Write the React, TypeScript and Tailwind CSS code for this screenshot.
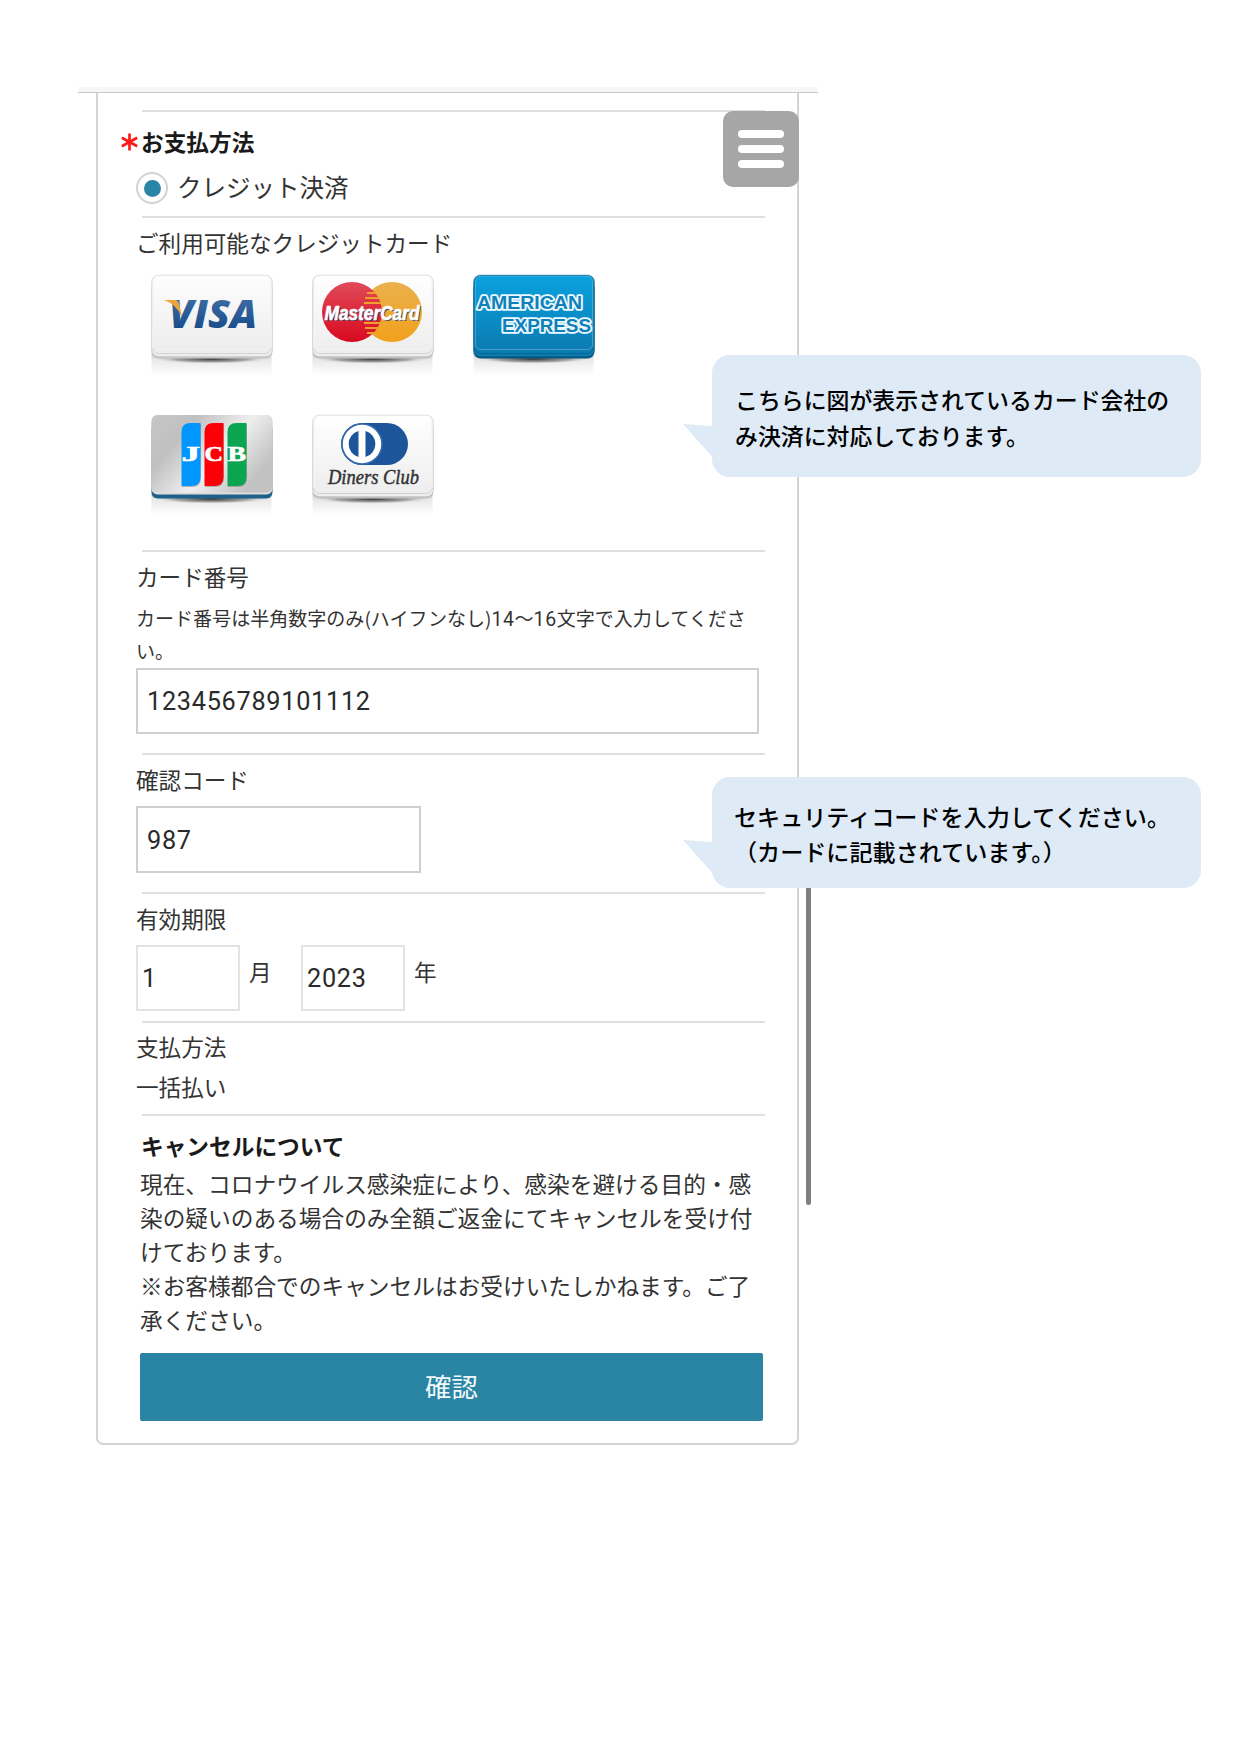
import type { ReactNode } from "react";

function Shadow({ id }: { id: string }) {
  return (
    <>
      <defs>
        <linearGradient id={id + "-glow"} x1="0" y1="0" x2="0" y2="1">
          <stop offset="0" stopColor="#b0b0b0" stopOpacity="0.8" />
          <stop offset="0.25" stopColor="#d0d0d0" stopOpacity="0.5" />
          <stop offset="0.6" stopColor="#e6e6e6" stopOpacity="0.4" />
          <stop offset="1" stopColor="#fff" stopOpacity="0" />
        </linearGradient>
        <radialGradient id={id + "-shadow"}>
          <stop offset="0" stopColor="#333" stopOpacity="1" />
          <stop offset="0.6" stopColor="#777" stopOpacity="0.6" />
          <stop offset="1" stopColor="#fff" stopOpacity="0" />
        </radialGradient>
      </defs>
      <rect x="1.500" y="82" width="120" height="26" fill={`url(#${id}-glow)`} />
      <ellipse cx="61.500" cy="88" rx="60" ry="5" fill={`url(#${id}-shadow)`} />
    </>
  );
}

function CardShell({ id, top, bottom, edge, children }: { id: string; top: string; bottom: string; edge: string; children: ReactNode }) {
  return (
    <svg width="124" height="110" viewBox="0 0 124 110" className="block">
      <defs>
        <linearGradient id={id + "-face"} x1="0" y1="0" x2="0" y2="1">
          <stop offset="0" stopColor={top} />
          <stop offset="1" stopColor={bottom} />
        </linearGradient>
      </defs>
      <Shadow id={id} />
      <rect x="1.500" y="10" width="121" height="77.500" rx="7" fill={edge} />
      <rect x="1.500" y="4" width="121" height="81.500" rx="7" fill={bottom} stroke={edge} strokeOpacity="0.45" strokeWidth="0.800" />
      <path d="M2.500 77Q3.500 82.500 9 82.500H114Q120.500 82.500 121.500 77" fill="none" stroke={edge} strokeOpacity="0.6" />
      <rect x="3.500" y="5" width="117" height="73.500" rx="5" fill={`url(#${id}-face)`} stroke="#fff" strokeOpacity="0.250" />
      {children}
    </svg>
  );
}

function Visa() {
  return (
    <CardShell id="visa" top="#fdfdfd" bottom="#ededed" edge="#c4c4c4">
      <defs>
        <linearGradient id="visa-ink" x1="0" y1="0" x2="0" y2="1">
          <stop offset="0" stopColor="#4a76aa" />
          <stop offset="1" stopColor="#0c4484" />
        </linearGradient>
      </defs>
      <text x="19" y="57" fontFamily="Open Sans" fontWeight="800" fontStyle="italic" fontSize="38" textLength="88" lengthAdjust="spacingAndGlyphs" fill="url(#visa-ink)">VISA</text>
      <path d="M14 29 H25 Q28 29 29 33 L32 46 Q26 33 14 29Z" fill="#eda43a" />
    </CardShell>
  );
}

function MasterCard() {
  return (
    <CardShell id="mc" top="#ffffff" bottom="#eeeeee" edge="#bfbfbf">
      <defs>
        <linearGradient id="mc-red" x1="0" y1="0" x2="0" y2="1">
          <stop offset="0" stopColor="#e04a58" />
          <stop offset="1" stopColor="#d9091f" />
        </linearGradient>
        <linearGradient id="mc-gold" x1="0" y1="0" x2="0" y2="1">
          <stop offset="0" stopColor="#eab14d" />
          <stop offset="1" stopColor="#f2a01c" />
        </linearGradient>
      </defs>
      <circle cx="81" cy="41" r="30" fill="url(#mc-gold)" />
      <circle cx="41" cy="41" r="30" fill="url(#mc-red)" />
      <path d="M56 22h9M54 27h14M53 32h17M53 52h17M54 57h14M56 62h9" stroke="#eea02c" strokeWidth="2" />
      <text x="14.500" y="50" fontFamily="Liberation Sans" fontWeight="700" fontStyle="italic" fontSize="19.500" textLength="95" lengthAdjust="spacingAndGlyphs" fill="#33446a">MasterCard</text>
      <text x="13.500" y="48.500" fontFamily="Liberation Sans" fontWeight="700" fontStyle="italic" fontSize="19.500" textLength="95" lengthAdjust="spacingAndGlyphs" fill="#fff" stroke="#fff" strokeWidth="0.600">MasterCard</text>
    </CardShell>
  );
}

function Amex() {
  return (
    <CardShell id="amex" top="#0aa2df" bottom="#0b7cb2" edge="#06567f">
      <text x="5" y="38" fontFamily="Liberation Sans" fontWeight="700" fontSize="18" textLength="105" lengthAdjust="spacingAndGlyphs" fill="#0f80b8" stroke="#eaf8ff" strokeWidth="3.600" strokeLinejoin="round" paintOrder="stroke">AMERICAN</text>
      <text x="30" y="61" fontFamily="Liberation Sans" fontWeight="700" fontSize="18" textLength="89" lengthAdjust="spacingAndGlyphs" fill="#0f80b8" stroke="#eaf8ff" strokeWidth="3.600" strokeLinejoin="round" paintOrder="stroke">EXPRESS</text>
    </CardShell>
  );
}

function JcbBar({ x, color, letter }: { x: number; color: string; letter: string }) {
  return (
    <g transform={`translate(${x} 12)`}>
      <path d="M0 9 Q0 0 9 0 H19 V54 Q19 63 10 63 H0Z" fill="#777" opacity="0.5" transform="translate(0.5 1)" />
      <path d="M0 9 Q0 0 9 0 H19 V54 Q19 63 10 63 H0Z" fill={color} />
      <text x="0" y="37.500" fontFamily="Liberation Serif" fontWeight="700" fontSize="21" textLength="18.500" lengthAdjust="spacingAndGlyphs" fill="#fff" stroke="#fff" strokeWidth="0.600">{letter}</text>
    </g>
  );
}

function Jcb() {
  return (
    <svg width="124" height="110" viewBox="0 0 124 110" className="block">
      <defs>
        <linearGradient id="jcb-face" x1="0" y1="0" x2="1" y2="0.55">
          <stop offset="0" stopColor="#c6c6c6" />
          <stop offset="0.3" stopColor="#c0c0c0" />
          <stop offset="0.65" stopColor="#efefef" />
          <stop offset="1" stopColor="#c2c2c2" />
        </linearGradient>
      </defs>
      <Shadow id="jcb" />
      <rect x="1.500" y="12" width="121" height="75.500" rx="6" fill="#1b6188" />
      <rect x="1.500" y="4" width="121" height="79.500" rx="6" fill="#dcdcdc" />
      <rect x="1.500" y="4" width="121" height="77.500" rx="6" fill="url(#jcb-face)" />
      <JcbBar x={31.5} color="#0096ff" letter="J" />
      <JcbBar x={54.5} color="#fb0006" letter="C" />
      <JcbBar x={77.5} color="#0ba551" letter="B" />
    </svg>
  );
}

function Diners() {
  return (
    <CardShell id="diners" top="#ffffff" bottom="#eeeeee" edge="#bfbfbf">
      <rect x="30" y="12" width="67" height="42" rx="21" fill="#1d559b" />
      <circle cx="51" cy="33" r="20" fill="#fff" stroke="#3568a6" strokeWidth="1.500" />
      <path d="M47.500 20 a13.500 13.500 0 0 0 0 26Z M54.500 20 a13.500 13.500 0 0 1 0 26Z" fill="#1d559b" />
      <text x="17" y="72.500" fontFamily="Liberation Serif" fontStyle="italic" fontSize="20" textLength="91" lengthAdjust="spacingAndGlyphs" fill="#333" stroke="#333" strokeWidth="0.450">Diners Club</text>
    </CardShell>
  );
}

function Divider() {
  return <div className="ml-[6px] h-[2px] w-[623px] shrink-0 bg-[#e0e0e0]" />;
}

function Label({ children }: { children: ReactNode }) {
  return <div className="h-[30px] text-[22.6px] leading-[30px]">{children}</div>;
}

const digits = "font-[Roboto,sans-serif] text-[25.3px] tracking-[0.7px] pt-[2px] text-[#2a2a2a]";
const hintDigits = "font-[Roboto,sans-serif] text-[19.5px] leading-none tracking-[0.6px]";

function Tail() {
  return (
    <svg className="absolute left-[-29px] top-0" width="32" height="36" viewBox="0 0 32 36">
      <path d="M0 0 L32 2.200 V36 L0 0Z" fill="#deeaf6" />
    </svg>
  );
}

export default function App() {
  return (
    <div className="relative h-[1755px] w-[1241px] overflow-hidden bg-white pl-[78px] pt-[87px] font-['Noto_Sans_CJK_JP',sans-serif] text-[#333]">
      <div className="h-[6px] w-[740px] border-b border-[#c8c8c8] bg-[#f7f7f7]" />
      <main className="relative ml-[18px] flex h-[1352px] w-[703px] flex-col rounded-b-[7px] border-2 border-t-0 border-[#d4d4d4] pl-[38px] pt-[17px]">
        <Divider />
        <section className="h-[104px] pt-[15px]">
          <h2 className="-ml-[15px] flex h-[30px] items-center text-[22.7px] font-bold leading-[30px] text-[#1a1a1a]">
            <svg width="17" height="18" viewBox="0 0 17 18" className="mr-[3px]">
              <path d="M8.500 0.500V17.500M0.800 4.700L16.200 13.300M16.200 4.700L0.800 13.300" stroke="#ff1a1a" strokeWidth="2.700" fill="none" />
            </svg>
            お支払方法
          </h2>
          <label className="mt-[15px] flex h-[32px] items-center text-[24.5px]">
            <span className="mr-[9px] flex size-[32px] items-center justify-center rounded-full border-2 border-[#d2d2d2]">
              <span className="size-[17px] rounded-full bg-[#2a84a4]" />
            </span>
            <span className="pb-[2px] leading-[30px]">クレジット決済</span>
          </label>
        </section>
        <Divider />
        <section className="h-[332px] pt-[10px]">
          <Label>ご利用可能なクレジットカード</Label>
          <div className="ml-[14px] mt-[13px] grid grid-cols-[124px_124px_124px] gap-x-[37px] gap-y-[30px]">
            <Visa />
            <MasterCard />
            <Amex />
            <Jcb />
            <Diners />
          </div>
        </section>
        <Divider />
        <section className="h-[201px] pt-[10px]">
          <Label>カード番号</Label>
          <p className="mt-[10px] h-[66px] text-[19.05px] leading-[32.5px]">
            カード番号は半角数字のみ(ハイフンなし)<span className={hintDigits}>14</span>〜<span className={hintDigits}>16</span>文字で入力してくださ<br />い。
          </p>
          <div className={`flex h-[66px] w-[623px] items-center border-2 border-[#cfcfcf] pl-[9px] ${digits}`}>123456789101112</div>
        </section>
        <Divider />
        <section className="h-[137px] pt-[10px]">
          <Label>確認コード</Label>
          <div className={`mt-[11px] flex h-[67px] w-[285px] items-center border-2 border-[#cfcfcf] pl-[9px] ${digits}`}>987</div>
        </section>
        <Divider />
        <section className="h-[127px] pt-[10px]">
          <Label>有効期限</Label>
          <div className="mt-[11px] flex h-[66px] text-[22.6px] leading-[54px]">
            <div className={`flex h-[66px] w-[104px] items-center border-2 border-[#e3e3e3] pl-[4px] ${digits}`}>1</div>
            <span className="ml-[9px] w-[52px]">月</span>
            <div className={`flex h-[66px] w-[104px] items-center border-2 border-[#e3e3e3] pl-[4px] ${digits}`}>2023</div>
            <span className="ml-[9px]">年</span>
          </div>
        </section>
        <Divider />
        <section className="h-[91px] pt-[9px]">
          <Label>支払方法</Label>
          <div className="h-[10px]" />
          <Label>一括払い</Label>
        </section>
        <Divider />
        <section className="ml-[4px] pt-[15px]">
          <h2 className="ml-[1px] h-[30px] text-[22.7px] font-bold leading-[30px] text-[#1a1a1a]">キャンセルについて</h2>
          <p className="mt-[6px] h-[171px] whitespace-nowrap text-[22.7px] leading-[34.1px]">
            現在、コロナウイルス感染症により、感染を避ける目的・感<br />
            染の疑いのある場合のみ全額ご返金にてキャンセルを受け付<br />
            けております。<br />
            ※お客様都合でのキャンセルはお受けいたしかねます。ご了<br />
            承ください。
          </p>
          <button className="mt-[15px] block h-[68px] w-[623px] rounded-[2px] bg-[#2a84a4] pb-[3px] text-[26.4px] leading-[65px] text-[#f2f8fa]">確認</button>
        </section>
        <button aria-label="メニュー" className="absolute right-[-2px] top-[18px] flex size-[76px] flex-col items-center justify-center gap-[7px] rounded-[10px] bg-[#a6a6a6]">
          <span className="h-[8px] w-[46px] rounded-full bg-white" />
          <span className="h-[8px] w-[46px] rounded-full bg-white" />
          <span className="h-[8px] w-[46px] rounded-full bg-white" />
        </button>
      </main>
      <div className="absolute left-[806px] top-[860px] h-[345px] w-[5px] rounded-full bg-[#7f7f7f]" />
      <aside className="absolute left-[712px] top-[355px] h-[122px] w-[489px] rounded-[18px] bg-[#deeaf6] pl-[23px] pt-[26px] text-[22.9px] font-medium leading-[36px] text-black">
        <div className="absolute left-0 top-[69px]"><Tail /></div>
        <p className="whitespace-nowrap">こちらに図が表示されているカード会社の<br />み決済に対応しております。</p>
      </aside>
      <aside className="absolute left-[712px] top-[777px] h-[111px] w-[489px] rounded-[18px] bg-[#deeaf6] pl-[22px] pt-[22px] text-[23.1px] font-medium leading-[35px] text-black">
        <div className="absolute left-0 top-[63px]"><Tail /></div>
        <p className="whitespace-nowrap">セキュリティコードを入力してください。<br />（カードに記載されています。）</p>
      </aside>
    </div>
  );
}
